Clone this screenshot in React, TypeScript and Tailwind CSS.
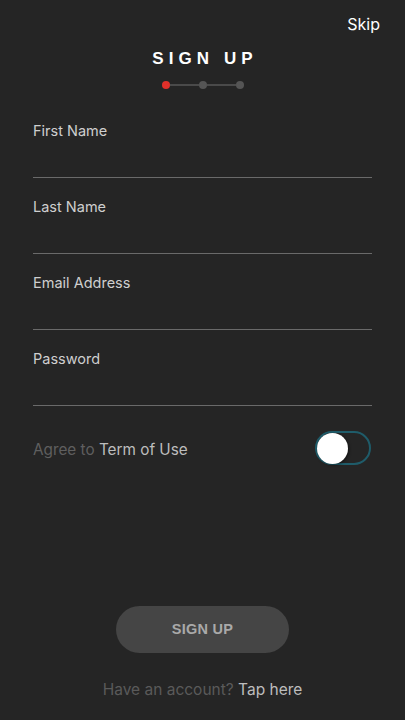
export default function App() {
  const fields = ['First Name', 'Last Name', 'Email Address', 'Password'];
  return (
    <div className="relative flex h-[720px] w-full flex-col bg-[#252525]" style={{ fontFamily: 'Inter, "Noto Sans", sans-serif' }}>
      <div className="absolute right-[25px] top-[14px] text-[16px] leading-[20px] text-white">Skip</div>

      {/* title + stepper */}
      <div className="pl-[5px] pt-[49px] text-center text-[17px] font-bold leading-[20px] tracking-[0.3em] text-white" style={{ fontFamily: '"Liberation Sans", sans-serif' }}>
        SIGN UP
      </div>
      <div className="mt-[12px] flex items-center justify-center">
        <div className="h-[8px] w-[8px] rounded-full bg-[#e0302a]" />
        <div className="h-[2px] w-[29px] bg-[#4a4a4a]" />
        <div className="h-[8px] w-[8px] rounded-full bg-[#555555]" />
        <div className="h-[2px] w-[29px] bg-[#4a4a4a]" />
        <div className="h-[8px] w-[8px] rounded-full bg-[#555555]" />
      </div>

      {/* fields */}
      <div className="mt-[32px] flex flex-col gap-[19px] px-[33px]">
        {fields.map(f => (
          <div key={f}>
            <div className="text-[14.5px] leading-[20px] text-[#cfcfcf]">{f}</div>
            <div className="h-[37px] border-b border-[#6a6a6a]" />
          </div>
        ))}
      </div>

      {/* agree */}
      <div className="mt-[25px] flex h-[34px] items-center justify-between pl-[33px] pr-[34px]">
        <div className="pt-[4px] text-[15.3px] leading-[20px] text-[#5f5f5f]">
          Agree to <span className="text-[#bdbdbd]">Term of Use</span>
        </div>
        <div className="flex h-[34px] w-[56px] items-center rounded-full border-2 border-[#1f5c6a] bg-[#252525]">
          <div className="h-[31px] w-[31px] rounded-full bg-white shadow-[1px_1px_3px_rgba(0,0,0,0.5)]" />
        </div>
      </div>

      {/* button */}
      <div className="mt-[141px] flex justify-center">
        <div className="flex h-[47px] w-[173px] items-center justify-center rounded-full bg-[#454545] text-[14.5px] font-bold tracking-[0.02em] text-[#a9a9a9]" style={{ fontFamily: '"Liberation Sans", sans-serif' }}>
          SIGN UP
        </div>
      </div>
      <div className="mt-[27px] text-center text-[15.5px] leading-[20px] text-[#5a5a5a]">
        Have an account? <span className="text-[#bdbdbd]">Tap here</span>
      </div>
    </div>
  );
}
